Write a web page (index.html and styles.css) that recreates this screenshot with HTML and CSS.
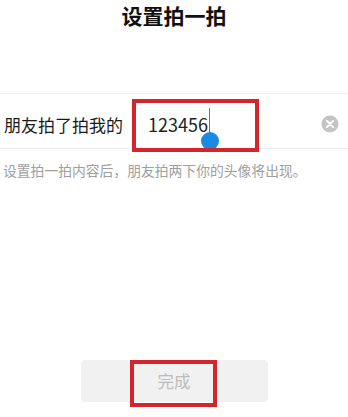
FILE: index.html
```html
<!DOCTYPE html>
<html lang="zh-CN">
<head>
    <meta charset="UTF-8">
    <meta name="viewport" content="width=device-width, initial-scale=1.0">
    <title>设置拍一拍</title>
    <link rel="stylesheet" href="styles.css">
</head>
<body>
    <div class="page">
        <h1 class="title">设置拍一拍</h1>

        <div class="field-row">
            <span class="label">朋友拍了拍我的</span>
            <span class="value">123456<span class="caret"></span></span>
            <svg class="clear" width="18" height="18" viewBox="0 0 18 18">
                <circle cx="9" cy="9" r="8.5" fill="#c4c4c4"/>
                <path d="M6 6 L12 12 M12 6 L6 12" stroke="#fff" stroke-width="2" stroke-linecap="round"/>
            </svg>
            <div class="mark mark-input"></div>
        </div>

        <p class="hint">设置拍一拍内容后，朋友拍两下你的头像将出现。</p>

        <div class="footer">
            <div class="done-wrap">
                <button class="done" disabled>完成</button>
                <div class="mark mark-done"></div>
            </div>
        </div>
    </div>
</body>
</html>
```

FILE: styles.css
```css
/* Global */
body {
    margin: 0;
    background: #fff;
    font-family: "Noto Sans CJK SC", "Noto Sans", sans-serif;
    color: #1a1a1a;
}

.page {
    display: flex;
    flex-direction: column;
    height: 100vh;
}

/* Header */
.title {
    margin: 0;
    font-size: 21px;
    line-height: 30px;
    font-weight: bold;
    text-align: center;
    color: #111;
}

/* Input row */
.field-row {
    position: relative;
    display: flex;
    align-items: center;
    margin-top: 63px;
    padding-top: 6px;
    box-sizing: border-box;
    height: 56px;
    border-top: 1px solid #f0f0f0;
    border-bottom: 1px solid #ececec;
}

.label {
    margin-left: 4px;
    font-size: 17px;
    color: #1a1a1a;
}

.value {
    margin-left: 25px;
    font-size: 18px;
    color: #222;
    display: flex;
    align-items: center;
}

.caret {
    position: relative;
    display: inline-block;
    width: 1.5px;
    height: 30px;
    margin-left: 1px;
    margin-top: -2px;
    background: #1e88e5;
}

.caret::after {
    content: "";
    position: absolute;
    left: -8px;
    top: 24px;
    width: 18px;
    height: 18px;
    border-radius: 50%;
    background: #1a8ae2;
}

.clear {
    margin-left: auto;
    margin-right: 9px;
}

/* Hint */
.hint {
    margin: 11px 0 0 3px;
    font-size: 13.8px;
    line-height: 20px;
    color: #9e9e9e;
}

/* Footer button */
.footer {
    margin-top: auto;
    margin-bottom: 15px;
    display: flex;
    justify-content: center;
}

.done-wrap {
    position: relative;
}

.done {
    display: block;
    width: 187px;
    height: 42px;
    border: none;
    border-radius: 4px;
    background: #f1f1f1;
    color: #bcbcbc;
    font-family: inherit;
    font-size: 16.5px;
}

/* Red annotation boxes */
.mark {
    position: absolute;
    box-sizing: border-box;
    border: 4px solid #d4242c;
}

.mark-input {
    left: 132px;
    top: 5px;
    width: 127px;
    height: 53px;
}

.mark-done {
    left: 49px;
    top: 0;
    width: 87px;
    height: 47px;
}
```
